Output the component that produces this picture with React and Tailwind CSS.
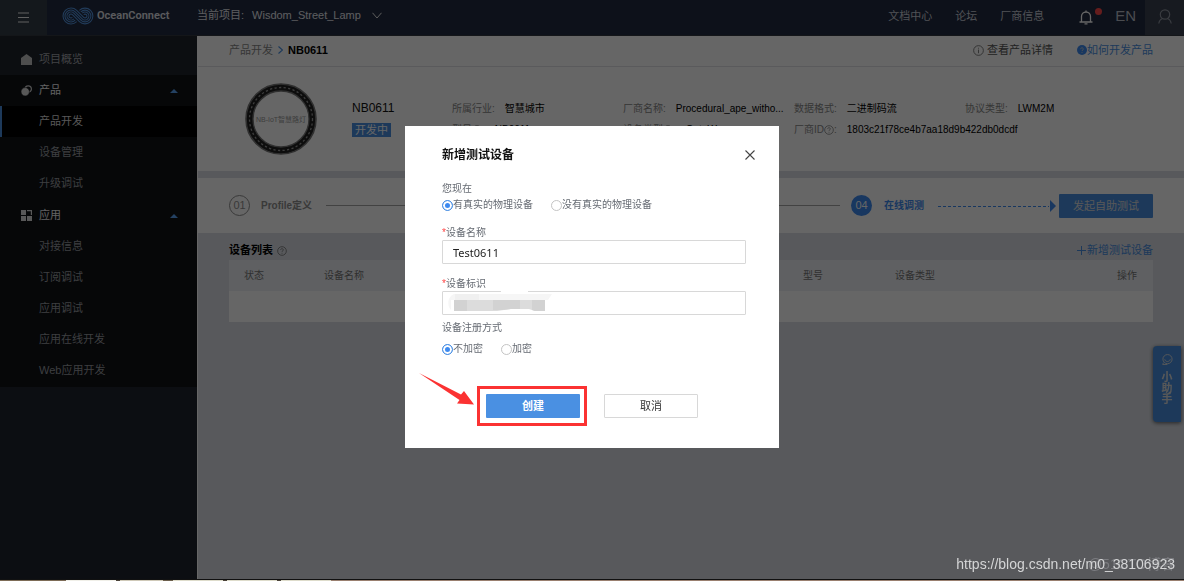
import React from "react";

const productItems = ["产品开发", "设备管理", "升级调试"];
const appItems = ["对接信息", "订阅调试", "应用调试", "应用在线开发", "Web应用开发"];

function HelpIcon({ className }) {
  return (
    <svg viewBox="0 0 12 12" className={className} fill="none" stroke="currentColor" aria-hidden="true">
      <circle cx="6" cy="6" r="5.2" />
      <path d="M4.4 4.8c0-2.1 3.2-2.1 3.2-.1 0 1.1-1.6 1.2-1.6 2.3M6 8.2v1" />
    </svg>
  );
}

function Logo() {
  return (
    <svg viewBox="0 0 96 54" className="h-[18px] w-8" fill="none" stroke="#5495e0" strokeWidth="3.2" aria-hidden="true">
      <path d="M44 44A24 24 0 1 1 44 10L65 31A5.700 5.700 0 1 0 65 23" />
      <path d="M39.700 39.700A18 18 0 1 1 39.700 14.300L60.700 35.300A11.700 11.700 0 1 0 60.700 18.700" />
      <path d="M35.500 35.500A12 12 0 1 1 35.500 18.500L56.500 39.500A17.700 17.700 0 1 0 56.500 14.500" />
      <path d="M31.200 31.200A6 6 0 1 1 31.200 22.800L52.200 43.800A23.700 23.700 0 1 0 52.200 10.200" />
    </svg>
  );
}

function Header() {
  return (
    <header className="flex h-9 items-stretch border-b border-[#33373f] bg-[#212b41] text-[11px] text-[#e6e8ee]">
      <button aria-label="菜单" className="flex w-[47px] items-center justify-center bg-[#323c46]">
        <svg viewBox="0 0 11 11" className="size-[11px]" stroke="#f0f0f0" aria-hidden="true">
          <path d="M0 1h11M0 5.5h11M0 10h11" />
        </svg>
      </button>
      <a href="#home" className="flex w-[150px] items-center gap-[3px] pb-[3px] pl-[15px]">
        <Logo />
        <span className="font-['Roboto',sans-serif] text-[11px] font-semibold text-[#e0e2e8]">OceanConnect</span>
      </a>
      <div className="flex items-center gap-2 pb-[4px]">
        <span>当前项目:</span>
        <button className="flex items-center gap-[11px]">
          Wisdom_Street_Lamp
          <svg viewBox="0 0 10 7" className="h-[7px] w-[10px]" fill="none" stroke="#e8e8e8" aria-hidden="true">
            <path d="M.5 .8 5 6l4.500-5.200" />
          </svg>
        </button>
      </div>
      <nav className="ml-auto flex items-center gap-[23px] pb-[3px] text-[#c6cad4]">
        <a href="#docs">文档中心</a>
        <a href="#forum">论坛</a>
        <a href="#vendor">厂商信息</a>
      </nav>
      <button aria-label="消息" className="relative ml-[33px] flex w-[18px] items-center justify-center">
        <svg viewBox="0 0 14 15" className="h-[15px] w-[14px]" fill="none" stroke="#fff" strokeWidth="1.300" aria-hidden="true">
          <path d="M.5 12h13M2.500 12V6.500a4.500 4.500 0 0 1 9 0V12M5.500 13.800h3M7 .5v1.500" />
        </svg>
        <span className="absolute top-2 left-[18px] size-[7px] rounded-full bg-[#ff4a4a]" />
      </button>
      <button className="mr-[9px] ml-5 pb-[3px] font-['Liberation_Sans',sans-serif] text-[15px] text-[#b8bdc8]">EN</button>
      <button aria-label="账号" className="flex w-[39px] items-center justify-center bg-[#3a4150] pb-[3px]">
        <svg viewBox="0 0 14 15" className="h-[15px] w-[14px]" fill="none" stroke="#8f95a1" strokeWidth="1.200" aria-hidden="true">
          <circle cx="7" cy="5.500" r="4.700" />
          <path d="M.8 14.500c.4-2.600 1.700-4.300 3.800-5M13.200 14.500c-.4-2.600-1.700-4.300-3.800-5" />
        </svg>
      </button>
    </header>
  );
}

function GroupHeader({ icon, children }) {
  return (
    <button className="flex h-[31px] w-full items-center gap-[7px] pr-[19px] pl-[21px] text-[#f4f4f4]">
      {icon}
      {children}
      <svg viewBox="0 0 8 4" className="ml-auto h-1 w-2" fill="#5aa2f5" aria-hidden="true">
        <path d="M4 0 8 4H0z" />
      </svg>
    </button>
  );
}

function SubItem({ active, children }) {
  return (
    <li>
      <a
        href="#item"
        className={
          active
            ? "flex h-[31px] items-center border-l-2 border-[#4a90e2] bg-black pl-[37px] text-[#dadada]"
            : "flex h-[31px] items-center pl-[39px] text-[#989ba0]"
        }
      >
        {children}
      </a>
    </li>
  );
}

function Sidebar() {
  return (
    <aside className="w-[197px] shrink-0 bg-[#20252f] text-[11px]">
      <a href="#overview" className="flex h-[39px] items-center gap-[7px] bg-[#1e232c] pt-[7px] pl-[21px] text-[#a2a5aa]">
        <svg viewBox="0 0 11 11" className="size-[11px]" fill="#c4c4c4" aria-hidden="true">
          <path d="M5.500 0 11 4v7H0V4z" />
        </svg>
        项目概览
      </a>
      <nav className="flex flex-col gap-px bg-[#0f1216] pb-px">
        <div>
          <GroupHeader
            icon={
              <svg viewBox="0 0 11 11" className="size-[11px]" aria-hidden="true">
                <circle cx="7.200" cy="4" r="3.200" fill="none" stroke="#d0d0d0" strokeWidth="1.200" />
                <circle cx="4.200" cy="6.800" r="4.200" fill="#ddd" stroke="#0f1216" strokeWidth=".6" />
              </svg>
            }
          >
            产品
          </GroupHeader>
          <ul>
            {productItems.map((t, i) => (
              <SubItem key={t} active={i === 0}>{t}</SubItem>
            ))}
          </ul>
        </div>
        <div>
          <GroupHeader
            icon={
              <svg viewBox="0 0 11 11" className="size-[11px]" fill="#ddd" aria-hidden="true">
                <path d="M0 0h5v5H0zM0 6h5v5H0zM6 6h5v5H6zM6 0h5v5H9.800V1.200H6z" />
              </svg>
            }
          >
            应用
          </GroupHeader>
          <ul>
            {appItems.map((t) => (
              <SubItem key={t}>{t}</SubItem>
            ))}
          </ul>
        </div>
      </nav>
    </aside>
  );
}

function Breadcrumb() {
  return (
    <div className="flex h-[31px] items-center border-b border-[#e0e2e6] bg-white pr-[31px] pb-[2px] pl-[31px] text-[11px]">
      <a href="#products" className="text-[#888]">产品开发</a>
      <svg viewBox="0 0 5 8" className="mx-[5px] h-2 w-[5px]" fill="none" stroke="#4a90e2" strokeWidth="1.200" aria-hidden="true">
        <path d="m.5 .5 4 3.500-4 3.500" />
      </svg>
      <span className="font-['Liberation_Sans',sans-serif] font-bold text-black">NB0611</span>
      <a href="#details" className="ml-auto flex items-center gap-[3px] text-[#555]">
        <svg viewBox="0 0 12 12" className="size-[11px]" fill="none" stroke="#777" aria-hidden="true">
          <circle cx="6" cy="6" r="5.300" />
          <path d="M6 5v4M6 3v1" />
        </svg>
        查看产品详情
      </a>
      <a href="#howto" className="ml-6 flex items-center text-[#4a90e2]">
        <svg viewBox="0 0 12 12" className="size-[10px]" aria-hidden="true">
          <circle cx="6" cy="6" r="6" fill="#3d8af0" />
          <path d="M4.400 5c0-2.200 3.200-2.200 3.200-.1C7.600 6 6 6 6 7.200M6 8.300v1.200" fill="none" stroke="#ccc" strokeWidth="1.100" />
        </svg>
        如何开发产品
      </a>
    </div>
  );
}

function Field({ label, help, value }) {
  return (
    <div className="flex min-w-0 items-center leading-[21px] whitespace-nowrap">
      <dt className="flex shrink-0 items-center text-[#888]">
        {label}
        {help && <HelpIcon className="size-[10px]" />}:
      </dt>
      <dd className="ml-[10px] text-black">{value}</dd>
    </div>
  );
}

function ProductInfo() {
  return (
    <section className="flex h-[104px] items-center bg-white pl-[47px]">
      <svg viewBox="0 0 72 72" className="size-[72px] shrink-0" role="img" aria-label="NB-IoT智慧路灯">
        <circle cx="36" cy="36" r="31.500" fill="none" stroke="#222" strokeWidth="7" />
        <circle cx="36" cy="36" r="35" fill="none" stroke="#777" strokeWidth="1.600" />
        <circle cx="36" cy="36" r="31.500" fill="none" stroke="#999" strokeWidth="1.300" strokeDasharray="2.200 2.370" />
        <circle cx="36" cy="36" r="28" fill="none" stroke="#777" strokeWidth="1.300" />
        <text x="36" y="38.500" textAnchor="middle" className="font-['Liberation_Sans','Noto_Sans_CJK_SC',sans-serif] text-[7px]" fill="#999">
          NB-IoT智慧路灯
        </text>
      </svg>
      <div className="ml-[35px] w-[100px] shrink-0 pt-[2px]">
        <h1 className="text-[12px] leading-[18px] text-[#111]">NB0611</h1>
        <span className="mt-[2px] inline-flex h-[14px] items-center bg-[#4a90e2] px-[3px] text-[11px] leading-[14px] text-white">开发中</span>
      </div>
      <dl className="grid min-w-0 flex-1 grid-cols-4 pr-12 text-[10px]">
        <Field label="所属行业" value="智慧城市" />
        <Field label="厂商名称" value="Procedural_ape_witho..." />
        <Field label="数据格式" value="二进制码流" />
        <Field label="协议类型" value="LWM2M" />
        <Field label="型号" help value="NB0611" />
        <Field label="设备类型" help value="GateWay" />
        <Field label="厂商ID" help value="1803c21f78ce4b7aa18d9b422db0dcdf" />
      </dl>
    </section>
  );
}

function Steps() {
  return (
    <section className="mt-[7px] flex h-[55px] items-center bg-white px-[31px] text-[10px] font-bold">
      <span className="flex size-[21px] items-center justify-center rounded-full border border-[#909090] text-[11px] font-normal text-[#909090]">01</span>
      <span className="ml-[11px] text-[#909090]">Profile定义</span>
      <span className="mr-[11px] ml-[14px] h-px flex-1 bg-[#a5a5a5]" />
      <span className="flex size-[21px] items-center justify-center rounded-full bg-[#3d8af0] text-[11px] font-normal text-white">04</span>
      <span className="ml-3 text-[#3d8af0]">在线调测</span>
      <svg viewBox="0 0 118 12" className="mr-[3px] ml-[14px] h-3 w-[118px]" aria-hidden="true">
        <path d="M0 6.500h111" stroke="#3d8af0" strokeDasharray="3 2" />
        <path d="M112 0v12l6-6z" fill="#3d8af0" />
      </svg>
      <button className="h-6 w-[94px] rounded-[1px] bg-[#4a90e2] pt-px text-[11px] font-normal text-[#ddd]">发起自助测试</button>
    </section>
  );
}

function DeviceList() {
  return (
    <section className="px-[31px] pt-2 text-[10px]">
      <div className="flex h-[19px] items-center text-[11px]">
        <h2 className="font-bold text-black">设备列表</h2>
        <HelpIcon className="ml-[4px] size-[10px] text-[#777]" />
        <button className="ml-auto flex items-center gap-px text-[#4a90e2]">
          <svg viewBox="0 0 9 9" className="size-[9px]" stroke="currentColor" aria-hidden="true">
            <path d="M0 4.500h9M4.500 0v9" />
          </svg>
          新增测试设备
        </button>
      </div>
      <table className="w-full table-fixed text-left">
        <thead>
          <tr className="h-[31px] bg-[#eef1f5] text-[#777]">
            <th className="w-20 pl-[15px] font-normal">状态</th>
            <th className="pl-[15px] font-normal">设备名称</th>
            <th className="w-[92px] pl-[15px] font-normal">型号</th>
            <th className="w-[180px] pl-[15px] font-normal">设备类型</th>
            <th className="w-[93px] pr-4 text-right font-normal">操作</th>
          </tr>
        </thead>
        <tbody>
          <tr className="h-[31px] bg-white">
            <td colSpan={5} />
          </tr>
        </tbody>
      </table>
    </section>
  );
}

function Radio({ name, label, checked }) {
  return (
    <label className="flex items-center">
      <input
        type="radio"
        name={name}
        defaultChecked={checked}
        className="size-[11px] appearance-none rounded-full border border-[#c4c4c4] bg-white checked:border-[#4a90e2] checked:bg-[#3d8af0] checked:shadow-[inset_0_0_0_2px_white]"
      />
      {label}
    </label>
  );
}

function Dialog() {
  return (
    <div className="fixed inset-0 z-10 flex items-center justify-center bg-black/60 pb-[7px]">
      <div role="dialog" aria-labelledby="dialog-title" className="w-[374px] bg-white pt-5 pb-[30px] text-[10px] leading-4 text-[#666b73]">
        <div className="flex h-[18px] items-center justify-between pr-6 pl-[37px]">
          <h2 id="dialog-title" className="text-[12px] font-bold text-[#111]">新增测试设备</h2>
          <button aria-label="关闭">
            <svg viewBox="0 0 10 10" className="size-[10px]" stroke="#444" strokeWidth="1.100" aria-hidden="true">
              <path d="m.5 .5 9 9M9.500 .5l-9 9" />
            </svg>
          </button>
        </div>
        <div className="mt-[17px] pr-[33px] pl-[37px]">
          <p>您现在</p>
          <div className="flex gap-[18px]">
            <Radio name="physical" label="有真实的物理设备" checked />
            <Radio name="physical" label="没有真实的物理设备" />
          </div>
          <label htmlFor="device-name" className="mt-[13px] block leading-[14px]">
            <span className="text-[#f44]">*</span>设备名称
          </label>
          <input id="device-name" defaultValue="Test0611" className="block h-6 w-full rounded-[1px] border border-[#d8d8d8] px-[10px] font-['Noto_Sans',sans-serif] text-[11px] text-[#222]" />
          <label htmlFor="device-id" className="mt-[13px] block leading-[14px]">
            <span className="text-[#f44]">*</span>设备标识
          </label>
          <div className="relative">
            <input id="device-id" className="block h-6 w-full rounded-[1px] border border-[#d8d8d8] px-[10px]" />
            <svg viewBox="0 0 106 22" className="absolute top-0 left-[6px] h-[22px] w-[106px]" aria-hidden="true">
              <path d="M6 3h98l-4 6H3v10C-1 15-1 6 6 3z" fill="#f6f6f6" />
              <path d="M53 0h27v1.500H53z" fill="#fff" />
              <path d="M7 3h24v6H7z" fill="#f0f0f0" />
              <path d="M6 9h91v11H87l-6-2H63l-7 1-7 1H6z" fill="#dcdcdc" />
              <path d="M6 9h13v11H6z" fill="#d2d2d2" />
              <path d="M45 9h27v9h-9l-9 1h-9zM84 9h13v11H87l-3-1z" fill="#d2d2d2" />
            </svg>
          </div>
          <p className="mt-[5px]">设备注册方式</p>
          <div className="mt-[5px] flex gap-[18px]">
            <Radio name="security" label="不加密" checked />
            <Radio name="security" label="加密" />
          </div>
        </div>
        <div className="mt-[37px] flex justify-center gap-6 text-[11px]">
          <div className="relative">
            <button className="block h-6 w-[94px] rounded-[1px] bg-[#4a90e2] font-bold text-white">创建</button>
            <span className="pointer-events-none absolute -top-2 -right-[7px] -bottom-2 -left-[9px] border-[3px] border-[#fb3232]" />
            <svg viewBox="0 0 55 32" className="pointer-events-none absolute -top-[21px] -left-[67px] h-8 w-[55px]" aria-hidden="true">
              <path d="M0 0 42 21.500 45 18 55 31.500 38 30.500 40.500 27z" fill="#fb3232" />
            </svg>
          </div>
          <button className="h-6 w-[94px] rounded-[1px] border border-[#d8d8d8] bg-white text-[#333]">取消</button>
        </div>
      </div>
    </div>
  );
}

export default function App() {
  return (
    <div className="flex min-h-screen flex-col font-['Liberation_Sans','Noto_Sans_CJK_SC',sans-serif]">
      <Header />
      <div className="flex flex-1">
        <Sidebar />
        <main className="min-w-0 flex-1 border-l border-white bg-[#dcdfe6]">
          <Breadcrumb />
          <ProductInfo />
          <Steps />
          <DeviceList />
        </main>
      </div>
      <button className="fixed top-[346px] right-[3px] flex h-[76px] w-7 flex-col items-center rounded-l-[4px] bg-[#4a90e2] pt-2 text-[11px] leading-[11px] font-bold text-[#ddd] shadow-[0_1px_4px_rgba(0,0,0,0.6)]">
        <svg viewBox="0 0 12 12" className="mb-[7px] size-[11px]" fill="none" stroke="#ddd" aria-hidden="true">
          <circle cx="6" cy="5.600" r="5" />
          <path d="M3 5.800c.6 3.200 5.400 3.200 6 0M1.500 9.500.8 11.500h5" />
        </svg>
        <span className="w-[11px]">小助手</span>
      </button>
      <Dialog />
      <div className="fixed right-[9px] bottom-2 z-20 text-[14px] leading-[18px] text-[#d4d5d6]">
        <span className="absolute right-0 bottom-0 text-[#7b7c80]">@51CTO博客</span>
        <span className="relative">https://blog.csdn.net/m0_38106923</span>
      </div>
      <div className="fixed inset-x-0 bottom-0 z-20 flex h-0.5 border-t border-[#111]">
        <span className="w-[66px] bg-[#7d6c57]" />
        <span className="w-[50px] bg-[#f0efe8]" />
        <span className="w-1 bg-[#4a4238]" />
        <span className="w-[43px] bg-[#cfc9b8]" />
        <span className="w-[10px] bg-[#6b5f4c]" />
        <span className="w-[50px] bg-[#dedccb]" />
        <span className="w-1 bg-[#4a4238]" />
        <span className="w-[50px] bg-[#dedccb]" />
        <span className="w-1 bg-[#4a4238]" />
        <span className="w-[50px] bg-[#dedccb]" />
        <span className="flex-1 bg-[#9a8070]" />
      </div>
    </div>
  );
}
